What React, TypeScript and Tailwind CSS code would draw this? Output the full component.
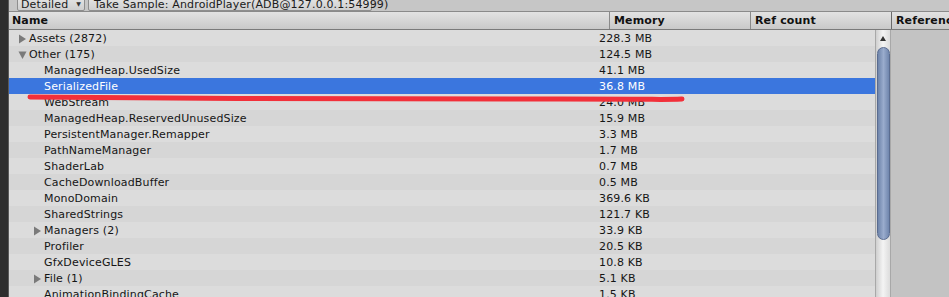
import React from "react";

type Row = { name: string; mem: string; level: 0 | 1; arrow?: "right" | "down"; selected?: boolean };

const rows: Row[] = [
  { name: "Assets (2872)", mem: "228.3 MB", level: 0, arrow: "right" },
  { name: "Other (175)", mem: "124.5 MB", level: 0, arrow: "down" },
  { name: "ManagedHeap.UsedSize", mem: "41.1 MB", level: 1 },
  { name: "SerializedFile", mem: "36.8 MB", level: 1, selected: true },
  { name: "WebStream", mem: "24.0 MB", level: 1 },
  { name: "ManagedHeap.ReservedUnusedSize", mem: "15.9 MB", level: 1 },
  { name: "PersistentManager.Remapper", mem: "3.3 MB", level: 1 },
  { name: "PathNameManager", mem: "1.7 MB", level: 1 },
  { name: "ShaderLab", mem: "0.7 MB", level: 1 },
  { name: "CacheDownloadBuffer", mem: "0.5 MB", level: 1 },
  { name: "MonoDomain", mem: "369.6 KB", level: 1 },
  { name: "SharedStrings", mem: "121.7 KB", level: 1 },
  { name: "Managers (2)", mem: "33.9 KB", level: 1, arrow: "right" },
  { name: "Profiler", mem: "20.5 KB", level: 1 },
  { name: "GfxDeviceGLES", mem: "10.8 KB", level: 1 },
  { name: "File (1)", mem: "5.1 KB", level: 1, arrow: "right" },
  { name: "AnimationBindingCache", mem: "1.5 KB", level: 1 },
];

function Arrow({ dir, light }: { dir: "right" | "down"; light?: boolean }) {
  const fill = light ? "#ffffff" : "#7a7a7a";
  return (
    <svg width="9" height="10" viewBox="0 0 9 10" className="shrink-0">
      {dir === "right" ? (
        <polygon points="1,0.5 8,5 1,9.5" fill={fill} />
      ) : (
        <polygon points="0.5,1.5 8.5,1.5 4.5,9" fill={fill} />
      )}
    </svg>
  );
}

export default function App() {
  const font = { fontFamily: '"DejaVu Sans", Verdana, sans-serif' };
  return (
    <div className="relative w-[949px] h-[297px] overflow-hidden flex bg-[#2b2b2b] text-[11px] leading-none tracking-[0.15px]" style={font}>
      <div className="w-[9px] shrink-0 bg-[#2e2e2e] border-r border-[#5a5a5a]" />
      <div className="flex-1 flex flex-col min-w-0 bg-[#c2c2c2]">
        {/* toolbar */}
        <div className="h-[12px] shrink-0 overflow-hidden bg-[#c6c6c6] border-b border-[#8a8a8a] relative">
          <div className="flex items-start gap-[3px] pl-[8px] -mt-[3px]">
            <div className="h-[14px] w-[68px] flex items-center justify-between px-[3px] bg-gradient-to-b from-[#e4e4e4] to-[#cfcfcf] border border-[#8e8e8e] rounded-[2px] text-[#1a1a1a]">
              <span>Detailed</span>
              <span className="text-[6px] text-[#333]">▼</span>
            </div>
            <div className="h-[14px] w-[284px] flex items-center px-[5px] bg-gradient-to-b from-[#e4e4e4] to-[#cfcfcf] border border-[#8e8e8e] rounded-[2px] text-[#1a1a1a] whitespace-nowrap">
              <span>Take Sample: AndroidPlayer(ADB@127.0.0.1:54999)</span>
            </div>
          </div>
        </div>
        {/* header */}
        <div className="h-[18px] shrink-0 flex bg-gradient-to-b from-[#e2e2e2] to-[#c9c9c9] border-b border-[#7a7a7a] font-bold text-[#111] items-stretch">
          <div className="w-[600px] flex items-center pl-[3px]">Name</div>
          <div className="w-[141px] flex items-center pl-[4px] border-l border-[#8a8a8a]">Memory</div>
          <div className="w-[141px] flex items-center pl-[4px] border-l border-[#8a8a8a]">Ref count</div>
          <div className="flex-1 flex items-center pl-[4px] border-l border-[#6a6a6a] overflow-hidden whitespace-nowrap">Referenced By</div>
        </div>
        {/* body */}
        <div className="flex-1 flex min-h-0">
          <div className="w-[866px] flex flex-col">
            {rows.map((r, i) => (
              <div
                key={r.name}
                className={
                  "h-[16px] shrink-0 flex items-center pt-[1px] " +
                  (r.selected ? "bg-[#3b76de] text-white" : i % 2 === 0 ? "bg-[#dcdcdc] text-[#151515]" : "bg-[#d6d6d6] text-[#151515]")
                }
              >
                <div className="w-[590px] flex items-center">
                  {r.level === 0 ? (
                    <div className="w-[19px] flex justify-end pr-[1px] pl-[7px]">
                      {r.arrow && <Arrow dir={r.arrow} light={r.selected} />}
                    </div>
                  ) : (
                    <div className="w-[34px] flex justify-end pr-[1px]">
                      {r.arrow && <Arrow dir={r.arrow} light={r.selected} />}
                    </div>
                  )}
                  <span className="pl-[1px] whitespace-nowrap">{r.name}</span>
                </div>
                <span className="whitespace-nowrap">{r.mem}</span>
              </div>
            ))}
          </div>
          {/* scrollbar */}
          <div className="w-[16px] shrink-0 relative bg-gradient-to-r from-[#cfcfcf] via-[#f4f4f4] to-[#dcdcdc] border-l border-[#a8a8a8] border-r border-[#5c5c5c]">
            <div className="absolute left-[4px] top-[6px] w-0 h-0 border-l-[3px] border-r-[3px] border-b-[5px] border-l-transparent border-r-transparent border-b-[#333]" />
            <div className="absolute left-[1px] right-[0px] top-[17px] h-[193px] rounded-[7px] bg-gradient-to-r from-[#6e84aa] via-[#9aaccd] to-[#7086ad] border border-[#5a6c90]" />
          </div>
          <div className="flex-1 bg-[#c3c3c3]" />
        </div>
      </div>
      {/* red marker annotation */}
      <svg className="absolute left-0 top-0 pointer-events-none" width="949" height="297">
        <path d="M30 97 C 200 99, 450 99, 560 99 S 660 100, 682 99" stroke="#f2303a" strokeWidth="5" fill="none" strokeLinecap="round" />
      </svg>
    </div>
  );
}
